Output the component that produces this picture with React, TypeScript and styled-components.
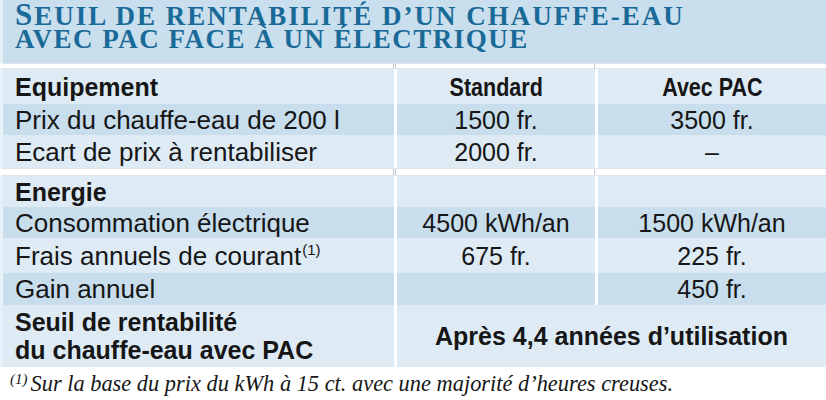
import React from "react";
import styled, { createGlobalStyle } from "styled-components";

const GlobalStyle = createGlobalStyle`
  body {
    margin: 0;
    background: #ffffff;
    font-family: "Liberation Sans", Arial, sans-serif;
    color: #161616;
  }
`;

type Tone = "light" | "dark";

const tones: Record<Tone, string> = {
  light: "#deebf5",
  dark: "#c8deed",
};

const rowsTop = [
  { label: "Prix du chauffe-eau de 200 l", std: "1500 fr.", pac: "3500 fr.", tone: "dark" as Tone, h: 31 },
  { label: "Ecart de prix à rentabiliser", std: "2000 fr.", pac: "–", tone: "light" as Tone, h: 33 },
];

const rowsEnergy = [
  { label: "Consommation électrique", std: "4500 kWh/an", pac: "1500 kWh/an", tone: "dark" as Tone, h: 31 },
  { label: "Frais annuels de courant", note: "(1)", std: "675 fr.", pac: "225 fr.", tone: "light" as Tone, h: 35 },
  { label: "Gain annuel", std: "", pac: "450 fr.", tone: "dark" as Tone, h: 32 },
];

export default function App() {
  return (
    <Page>
      <GlobalStyle />
      <TitleBand>
        <TitleLine>
          <Initial>S</Initial>
          <SmallCaps $spacing={2}>euil de rentabilité d’un chauffe-eau</SmallCaps>
        </TitleLine>
        <TitleLine>
          <SmallCaps $spacing={1.5}>avec pac face à un électrique</SmallCaps>
        </TitleLine>
      </TitleBand>

      <Spacer $h={6}>
        <Tick />
        <Tick />
        <Tick />
      </Spacer>

      <Row $h={35}>
        <Cell $tone="light">
          <Label $bold>Equipement</Label>
        </Cell>
        <Cell $tone="light" $center>
          <HeadText>Standard</HeadText>
        </Cell>
        <Cell $tone="light" $center>
          <HeadText>Avec PAC</HeadText>
        </Cell>
      </Row>
      {rowsTop.map((r) => (
        <Row key={r.label} $h={r.h}>
          <Cell $tone={r.tone}>
            <Label>{r.label}</Label>
          </Cell>
          <Cell $tone={r.tone} $center>
            <Value>{r.std}</Value>
          </Cell>
          <Cell $tone={r.tone} $center>
            <Value>{r.pac}</Value>
          </Cell>
        </Row>
      ))}

      <Spacer $h={8}>
        <Tick />
        <Tick />
        <Tick />
      </Spacer>

      <Row $h={31}>
        <Cell $tone="light">
          <Label $bold>Energie</Label>
        </Cell>
        <Cell $tone="light" />
        <Cell $tone="light" />
      </Row>
      {rowsEnergy.map((r) => (
        <Row key={r.label} $h={r.h}>
          <Cell $tone={r.tone}>
            <Label>
              {r.label}
              {r.note && <Sup>{r.note}</Sup>}
            </Label>
          </Cell>
          <Cell $tone={r.tone} $center>
            <Value>{r.std}</Value>
          </Cell>
          <Cell $tone={r.tone} $center>
            <Value>{r.pac}</Value>
          </Cell>
        </Row>
      ))}

      <SummaryRow>
        <Cell $tone="light">
          <Label $bold>
            Seuil de rentabilité
            <br />
            du chauffe-eau avec PAC
          </Label>
        </Cell>
        <Cell $tone="light" $center>
          <Result>Après 4,4 années d’utilisation</Result>
        </Cell>
      </SummaryRow>

      <Footnote>
        <FootMark>(1)</FootMark>
        Sur la base du prix du kWh à 15 ct. avec une majorité d’heures creuses.
      </Footnote>
    </Page>
  );
}

const Page = styled.div`
  width: 826px;
  height: 400px;
  overflow: hidden;
`;

const TitleBand = styled.div`
  height: 63px;
  box-sizing: border-box;
  background: #c9dfed;
  border-left: 3px solid #e4eef5;
  padding: 3px 0 0 12px;
  font-family: "Liberation Serif", "Times New Roman", serif;
  font-weight: bold;
  color: #1a6a98;
`;

const TitleLine = styled.div`
  height: 24px;
  line-height: 24px;
  white-space: nowrap;
`;

const Initial = styled.span`
  display: inline-block;
  line-height: 24px;
  font-size: 31px;
  letter-spacing: 2px;
`;

const SmallCaps = styled.span<{ $spacing: number }>`
  display: inline-block;
  line-height: 24px;
  font-size: 27px;
  text-transform: uppercase;
  letter-spacing: ${(p) => p.$spacing}px;
`;

const Row = styled.div<{ $h: number }>`
  display: grid;
  grid-template-columns: 391px 198px 1fr;
  column-gap: 3px;
  height: ${(p) => p.$h}px;
  border-left: 3px solid #e8f1f7;
  background: #ffffff;
`;

const SummaryRow = styled(Row).attrs({ $h: 62 })`
  grid-template-columns: 391px 1fr;
`;

const Spacer = styled.div<{ $h: number }>`
  display: grid;
  grid-template-columns: 390px 2px 197px 2px 1fr;
  height: ${(p) => p.$h}px;
  border-left: 3px solid #ffffff;
  border-top: 1px solid #dfe5ea;
  border-bottom: 1px solid #dfe5ea;
  box-sizing: border-box;
  & > :nth-child(1) {
    grid-column: 2;
  }
  & > :nth-child(2) {
    grid-column: 3;
  }
  & > :nth-child(3) {
    grid-column: 5;
  }
`;

const Tick = styled.div`
  border-left: 1px solid #c3cad0;
`;

const Cell = styled.div<{ $tone: Tone; $center?: boolean }>`
  display: flex;
  align-items: center;
  justify-content: ${(p) => (p.$center ? "center" : "flex-start")};
  padding-left: ${(p) => (p.$center ? 0 : 12)}px;
  background: ${(p) => tones[p.$tone]};
  min-width: 0;
`;

const Label = styled.div<{ $bold?: boolean }>`
  font-size: ${(p) => (p.$bold ? 25 : 26)}px;
  font-weight: ${(p) => (p.$bold ? 700 : 400)};
  line-height: 28px;
  white-space: nowrap;
`;

const Result = styled.div`
  font-size: 25px;
  font-weight: 700;
  line-height: 28px;
  white-space: nowrap;
`;

const Value = styled.div`
  font-size: 25px;
  line-height: 28px;
  white-space: nowrap;
`;

const HeadText = styled.div`
  font-size: 25px;
  font-weight: 700;
  line-height: 28px;
  white-space: nowrap;
  transform: scaleX(0.86);
`;

const Sup = styled.sup`
  font-size: 15px;
  vertical-align: 10px;
  line-height: 0;
  margin-left: 1px;
`;

const Footnote = styled.div`
  padding: 4px 0 0 10px;
  font-family: "Liberation Serif", "DejaVu Serif", serif;
  font-style: italic;
  font-size: 22.4px;
  line-height: 26px;
  white-space: nowrap;
`;

const FootMark = styled.sup`
  font-size: 15px;
  vertical-align: 7px;
  line-height: 0;
  margin-right: 3px;
`;
